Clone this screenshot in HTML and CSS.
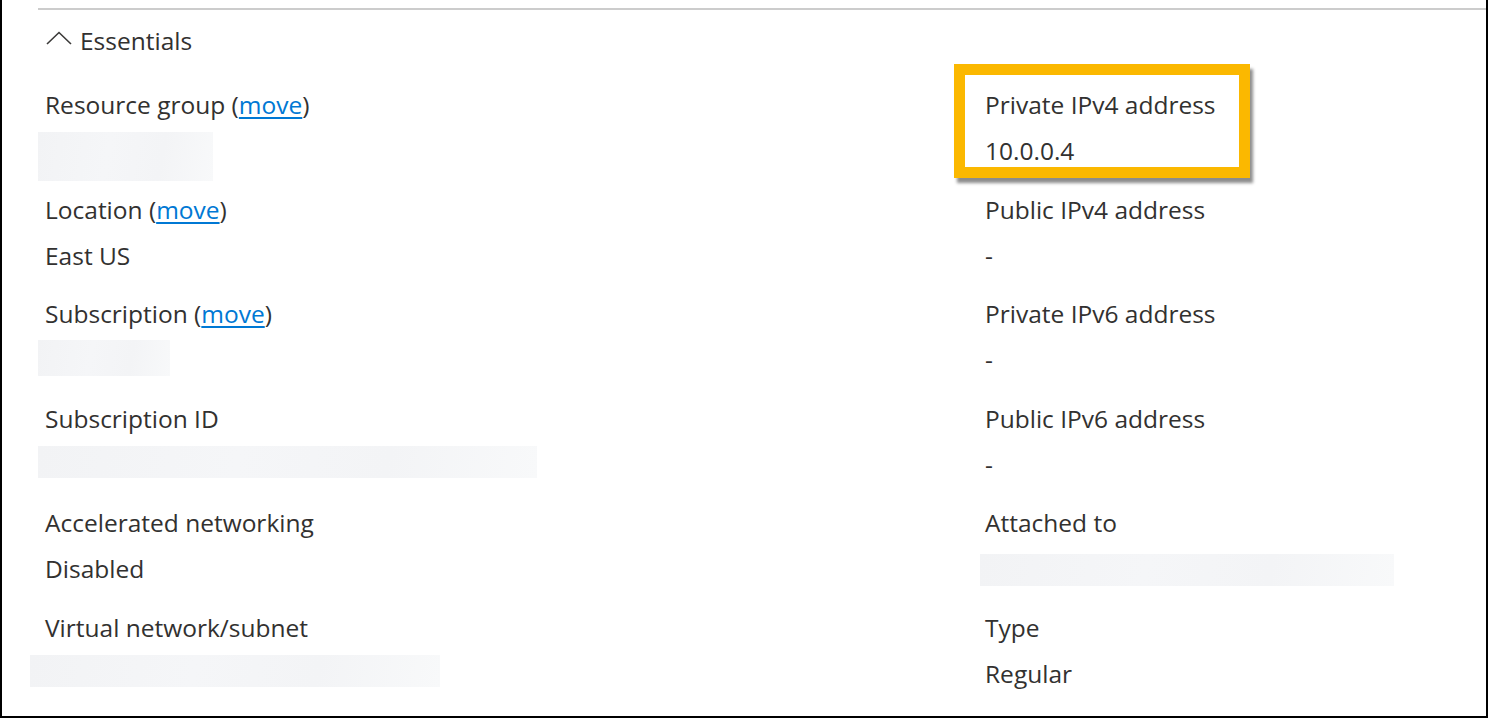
FILE: index.html
```html
<!DOCTYPE html>
<html lang="en">
<head>
    <meta charset="UTF-8">
    <title>Network interface - Essentials</title>
    <link rel="stylesheet" href="styles.css">
</head>
<body>
    <div class="frame">
        <div class="panel">
            <div class="essentials-header">
                <svg class="chevron" width="26" height="14" viewBox="0 0 26 14">
                    <path d="M1 13 L13 1.5 L25 13" fill="none" stroke="#3b3a39" stroke-width="1.6"/>
                </svg>
                <span>Essentials</span>
            </div>

            <div class="fields">
                <div class="field">
                    <div class="label">Resource group (<a href="#">move</a>)</div>
                    <div class="value"><div class="redacted redacted-rg"></div></div>
                </div>
                <div class="field">
                    <div class="highlight"></div>
                    <div class="label">Private IPv4 address</div>
                    <div class="value">10.0.0.4</div>
                </div>

                <div class="field">
                    <div class="label">Location (<a href="#">move</a>)</div>
                    <div class="value">East US</div>
                </div>
                <div class="field">
                    <div class="label">Public IPv4 address</div>
                    <div class="value">-</div>
                </div>

                <div class="field">
                    <div class="label">Subscription (<a href="#">move</a>)</div>
                    <div class="value"><div class="redacted redacted-sub"></div></div>
                </div>
                <div class="field">
                    <div class="label">Private IPv6 address</div>
                    <div class="value">-</div>
                </div>

                <div class="field">
                    <div class="label">Subscription ID</div>
                    <div class="value"><div class="redacted redacted-subid"></div></div>
                </div>
                <div class="field">
                    <div class="label">Public IPv6 address</div>
                    <div class="value">-</div>
                </div>

                <div class="field">
                    <div class="label">Accelerated networking</div>
                    <div class="value">Disabled</div>
                </div>
                <div class="field">
                    <div class="label">Attached to</div>
                    <div class="value"><div class="redacted redacted-attached"></div></div>
                </div>

                <div class="field">
                    <div class="label">Virtual network/subnet</div>
                    <div class="value"><div class="redacted redacted-vnet"></div></div>
                </div>
                <div class="field">
                    <div class="label">Type</div>
                    <div class="value">Regular</div>
                </div>
            </div>
        </div>
    </div>
</body>
</html>
```

FILE: styles.css
```css
html, body {
    margin: 0;
    background: #ffffff;
}
body {
    font-family: 'Open Sans', 'Noto Sans', sans-serif;
    font-size: 24.5px;
    color: #323130;
}
.frame {
    box-sizing: border-box;
    width: 1488px;
    height: 718px;
    border: 2px solid #000000;
    border-top: none;
    overflow: hidden;
}
.panel {
    margin-top: 8px;
    margin-left: 36px;
    border-top: 2px solid #cccccc;
}
.essentials-header {
    display: flex;
    align-items: center;
    gap: 8px;
    margin-top: 7px;
    padding-left: 8px;
    height: 46px;
}
.chevron {
    display: block;
    margin-top: -4px;
}
.fields {
    display: grid;
    grid-template-columns: 940px 1fr;
    row-gap: 12.5px;
    margin-top: 19px;
    padding-left: 7px;
}
.field {
    position: relative;
}
.label, .value {
    height: 46px;
    line-height: 46px;
    white-space: nowrap;
}
.value {
    display: flow-root;
}
.label a {
    color: #0078d4;
    text-decoration: underline;
    text-underline-offset: 3px;
}
.redacted {
    background: linear-gradient(100deg, #f2f3f5 0%, #f5f6f8 40%, #f3f4f6 70%, #f8f9fa 100%);
}
.redacted-rg {
    width: 175px;
    height: 49px;
    margin-left: -7px;
    margin-top: 4px;
}
.redacted-sub {
    width: 132px;
    height: 36px;
    margin-left: -7px;
    margin-top: 3px;
}
.redacted-subid {
    width: 499px;
    height: 32px;
    margin-left: -7px;
    margin-top: 4px;
}
.redacted-attached {
    width: 414px;
    height: 32px;
    margin-left: -5px;
    margin-top: 8px;
}
.redacted-vnet {
    width: 410px;
    height: 32px;
    margin-left: -15px;
    margin-top: 4px;
}
.highlight {
    position: absolute;
    left: -31px;
    top: -18px;
    width: 274px;
    height: 92px;
    border: 11px solid #fbb800;
    box-shadow: 3px 5px 3px rgba(0, 0, 0, 0.45);
}
```
